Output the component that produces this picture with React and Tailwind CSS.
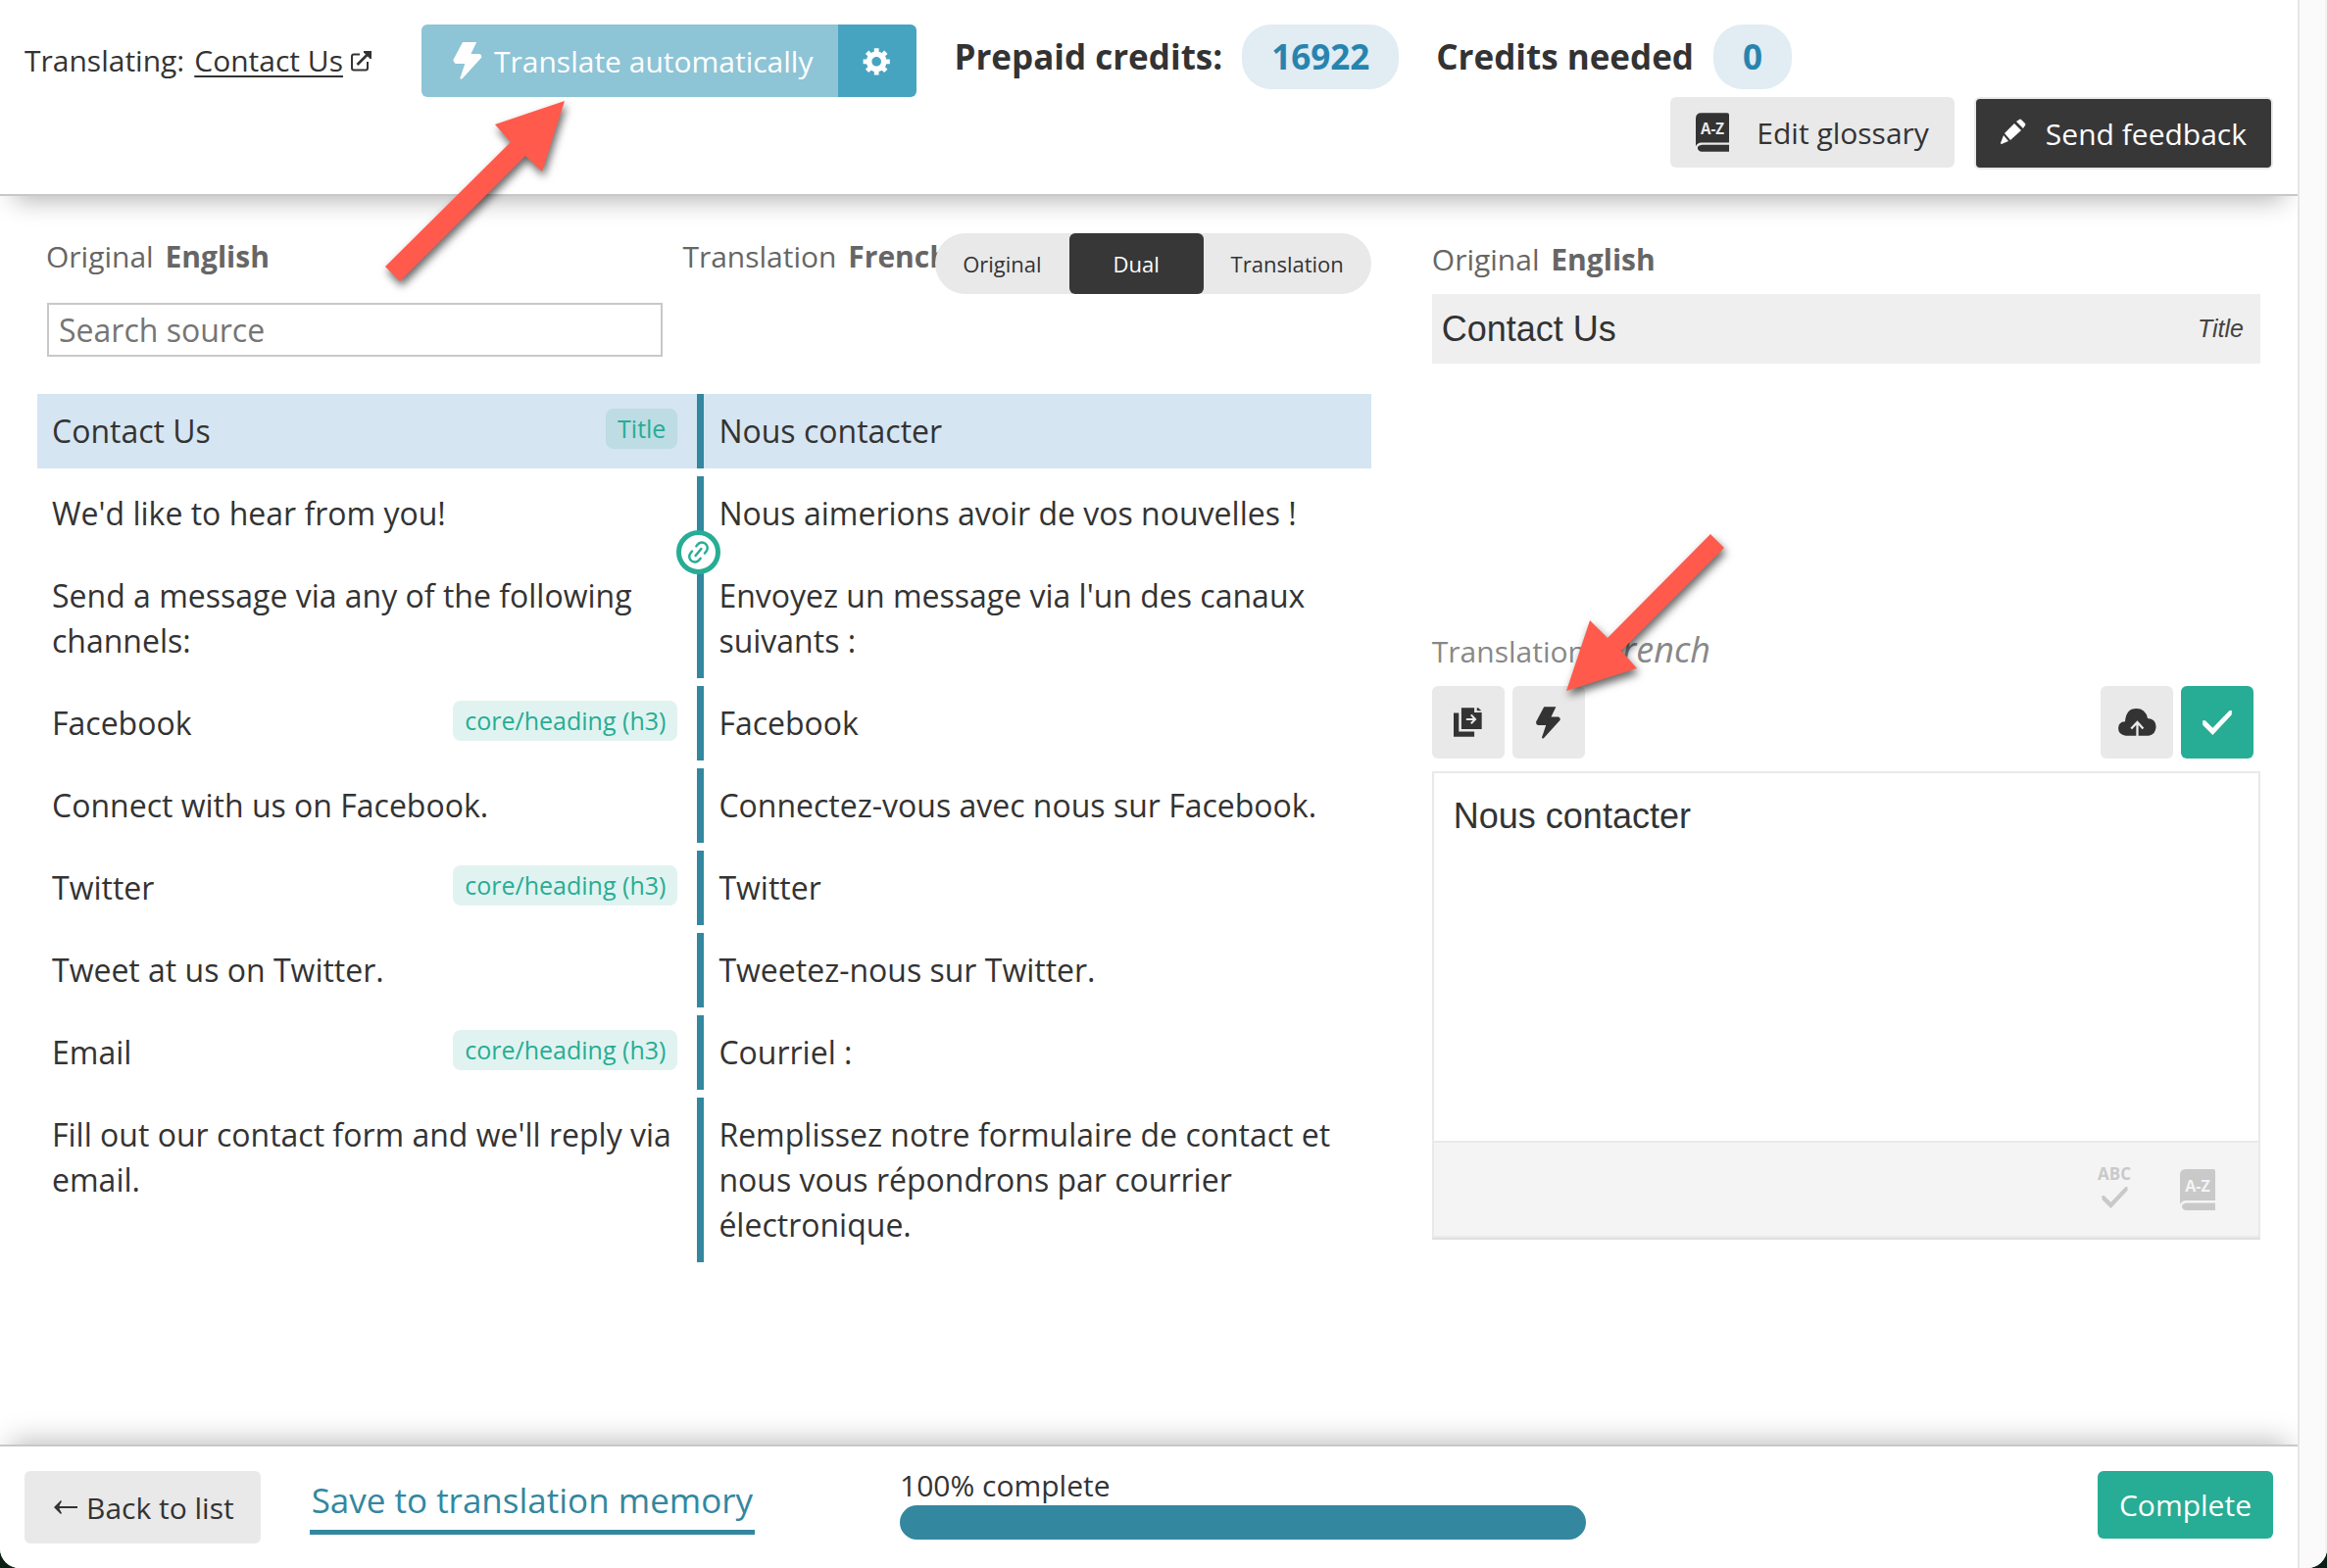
import React, { useState } from "react";
import { Link2 } from "lucide-react";

const segments = [
  { source: "Contact Us", target: "Nous contacter", tag: "Title" },
  {
    source: "We'd like to hear from you!",
    target: "Nous aimerions avoir de vos nouvelles !",
    linkNext: true,
  },
  {
    source: "Send a message via any of the following channels:",
    target: "Envoyez un message via l'un des canaux suivants :",
  },
  { source: "Facebook", target: "Facebook", tag: "core/heading (h3)" },
  {
    source: "Connect with us on Facebook.",
    target: "Connectez-vous avec nous sur Facebook.",
  },
  { source: "Twitter", target: "Twitter", tag: "core/heading (h3)" },
  { source: "Tweet at us on Twitter.", target: "Tweetez-nous sur Twitter." },
  { source: "Email", target: "Courriel :", tag: "core/heading (h3)" },
  {
    source: "Fill out our contact form and we'll reply via email.",
    target:
      "Remplissez notre formulaire de contact et nous vous répondrons par courrier électronique.",
  },
];

const views = ["Original", "Dual", "Translation"];

const BoltIcon = ({ className }) => (
  <svg viewBox="0 0 76 99" className={className} fill="currentColor" aria-hidden="true">
    <path d="M25 0H62L47 31H70Q76 33 75 41L24 97Q20 100 18 96L31 57H6Q0 55 0 47Z" />
  </svg>
);

const ExternalIcon = ({ className }) => (
  <svg viewBox="0 0 21 21" className={className} fill="none" stroke="currentColor" strokeWidth="2" aria-hidden="true">
    <path d="M9 3.500H3Q1 3.500 1 5.500V17.500Q1 19.500 3 19.500H15Q17 19.500 17 17.500V11" />
    <path d="M6.500 14L17.500 3" strokeWidth="2.600" />
    <path d="M13 0H21V8H19.500L13 1.500Z" fill="currentColor" stroke="none" />
  </svg>
);

const GearIcon = ({ className }) => (
  <svg viewBox="0 0 20 20" className={className} fill="currentColor" aria-hidden="true">
    <path d="M18 12h-2.180c-.170.700-.440 1.350-.810 1.930l1.540 1.540-2.100 2.100-1.540-1.540c-.580.360-1.230.630-1.910.790V19H8v-2.180c-.680-.160-1.330-.430-1.910-.790l-1.540 1.540-2.120-2.120 1.540-1.540c-.360-.580-.630-1.230-.790-1.910H1V9.030h2.170c.160-.700.440-1.350.800-1.940L2.430 5.550l2.100-2.100 1.540 1.540c.580-.370 1.240-.640 1.930-.810V2h3v2.180c.680.160 1.330.430 1.910.790l1.540-1.540 2.120 2.120-1.540 1.540c.360.590.640 1.240.800 1.940H18V12zm-8.500 1.500c1.660 0 3-1.340 3-3s-1.340-3-3-3-3 1.340-3 3 1.340 3 3 3z" />
  </svg>
);

const GlossaryIcon = ({ className, letters }) => (
  <svg viewBox="0 0 36 42" className={className} fill="currentColor" aria-hidden="true">
    <path d="M6 0H34Q36 0 36 2V32H6Q2 32 0 36V6Q0 0 6 0Z" />
    <path d="M7 34.500H36V42H6Q2 41 2 38Q2 35 7 34.500Z" />
    <text
      x="18"
      y="23"
      textAnchor="middle"
      fontFamily="'Open Sans', sans-serif"
      fontSize="16"
      fontWeight="700"
      fill={letters}
    >
      A-Z
    </text>
  </svg>
);

const PencilIcon = ({ className }) => (
  <svg viewBox="0 0 26 26" className={className} fill="currentColor" aria-hidden="true">
    <path d="M19 1Q20 0 21 1L25 5Q26 6 25 7L23 10L16 3Z" />
    <path d="M14 5L21 12L10 22L4 15Z" />
    <path d="M3 17L8 23L1 26Q0 26 0 25Z" />
  </svg>
);

const CopyIcon = ({ className }) => (
  <svg viewBox="0 0 88 90" className={className} fill="currentColor" aria-hidden="true">
    <path d="M0 16H16V74H64V90H0Z" />
    <path d="M24 0H64V15H87V66H24Z" />
    <path d="M72 0H76L86 9H72Z" />
    <path d="M39 36H66M54 22L67 36L54 49" fill="none" stroke="#e9e9e9" strokeWidth="6" />
  </svg>
);

const CloudIcon = ({ className }) => (
  <svg viewBox="0 0 118 85" className={className} fill="currentColor" aria-hidden="true">
    <path d="M23 84Q0 82 0 61Q0 41 21 40Q24 0 56 0Q84 0 91 30Q117 32 117 57Q115 82 94 84Z" />
    <path d="M59 85V44M40 62L59 42L77 62" fill="none" stroke="#e9e9e9" strokeWidth="7" />
  </svg>
);

const CheckIcon = ({ className }) => (
  <svg viewBox="0 0 90 76" className={className} fill="currentColor" aria-hidden="true">
    <path d="M0 31H8L31 54L83 0H90V13L31 76L0 45Z" />
  </svg>
);

const BackIcon = ({ className }) => (
  <svg viewBox="0 0 24 14" className={className} fill="currentColor" aria-hidden="true">
    <path d="M0 7L7 0L8 1Q6 4 5.500 6H24V8H5.500Q6 10 8 13L7 14Z" />
  </svg>
);

// callout arrows drawn over the editor
const Arrow = ({ points, className }) => (
  <svg viewBox="0 0 184 184" className={className} aria-hidden="true">
    <polygon points={points} fill="#ff5a4c" />
  </svg>
);

const Tag = ({ children }) => (
  <span className="mr-5 h-[41px] shrink-0 rounded-lg bg-[#27ad95]/14 px-3 text-[25px] leading-[40px] text-[#27ad95]">
    {children}
  </span>
);

const Header = () => (
  <header className="relative z-10 border-b-2 border-[#c8c8c8] bg-white px-[25px] pt-[25px] pb-[25px] shadow-[0_18px_24px_-14px_rgba(0,0,0,0.3)]">
    <div className="flex h-[74px] items-start">
      <div className="flex w-[405px] shrink-0 items-center text-[30px] leading-[74px]">
        <span>Translating:</span>
        <a href="#contact" className="ml-[10px] flex items-center">
          <span className="underline decoration-2 underline-offset-4">Contact Us</span>
          <ExternalIcon className="ml-2 size-[21px]" />
        </a>
      </div>
      <div className="flex h-full shrink-0 overflow-hidden rounded-md text-white">
        <button className="flex items-center bg-[#8dc4d6] pr-[26px] pl-8 text-[30px]">
          <BoltIcon className="mr-3 h-[38px] w-[30px]" />
          Translate automatically
        </button>
        <button aria-label="Settings" className="flex w-20 items-center justify-center bg-[#47a4c0]">
          <GearIcon className="size-8" />
        </button>
      </div>
      <div className="ml-[38px] flex shrink-0 items-center text-[35px] leading-[66px] font-bold">
        <span>Prepaid credits:</span>
        <span className="ml-5 rounded-[30px] bg-[#e1ecf3] px-[30px] text-[#2884af]">16922</span>
        <span className="ml-[38px]">Credits needed</span>
        <span className="ml-5 rounded-[30px] bg-[#e1ecf3] px-[30px] text-[#2884af]">0</span>
      </div>
    </div>
    <div className="flex h-[74px] items-start justify-end gap-5">
      <button className="flex h-[72px] items-center rounded-md bg-[#e9e9e9] px-[26px] text-[30px]">
        <GlossaryIcon className="mr-7 h-10 w-[34px]" letters="#e9e9e9" />
        Edit glossary
      </button>
      <button className="flex h-[74px] items-center rounded-md border-2 border-[#e9e9e9] bg-[#373737] px-[25px] text-[30px] text-white">
        <PencilIcon className="mr-5 mb-1 size-[26px]" />
        Send feedback
      </button>
    </div>
  </header>
);

const SegmentList = ({ view, setView }) => (
  <section className="relative w-3/5 shrink-0 pt-[38px]">
    <div className="grid grid-cols-2 text-[30px] leading-[48px] text-[#666]">
      <div className="pl-[9px]">
        Original <b className="ml-1">English</b>
      </div>
      <div className="-ml-[22px]">
        Translation <b className="ml-1">French</b>
      </div>
    </div>
    <div className="absolute top-[38px] right-0 flex h-[62px] overflow-hidden rounded-full bg-[#e9e9e9] text-[22px]">
      {views.map((item) => (
        <button
          key={item}
          onClick={() => setView(item)}
          className={
            item === view
              ? "w-[137px] rounded-md bg-[#373737] text-white"
              : "px-7"
          }
        >
          {item}
        </button>
      ))}
    </div>
    <div className="mt-[23px] grid grid-cols-2">
      <input
        type="text"
        aria-label="Search source"
        placeholder="Search source"
        className="mr-[42px] ml-[10px] h-[55px] border-2 border-[#c8c8c8] px-[10px] text-[32px] placeholder:text-[#757575]"
      />
    </div>
    <table className="mt-[30px] w-full table-fixed border-separate border-spacing-x-0 border-spacing-y-2 text-left text-[32px] leading-[46px]">
      <tbody>
        {segments.map((item, index) => (
          <tr key={index} className={index === 0 ? "bg-[#d5e5f2]" : ""}>
            <td className="relative border-r-[7px] border-[#33879f] py-[15px] pl-[15px] align-top">
              <div className="flex items-start justify-between">
                <span>{item.source}</span>
                {item.tag && <Tag>{item.tag}</Tag>}
              </div>
              {item.linkNext && (
                <button
                  aria-label="Link segments"
                  className="absolute -right-6 -bottom-6 z-10 flex size-[45px] items-center justify-center rounded-full border-5 border-[#27ad95] bg-white text-[#27ad95]"
                >
                  <Link2 className="size-[27px] shrink-0 -rotate-50" strokeWidth={2.2} />
                </button>
              )}
            </td>
            <td className="py-[15px] pl-[15px] align-top">{item.target}</td>
          </tr>
        ))}
      </tbody>
    </table>
  </section>
);

const Editor = ({ text, setText }) => (
  <section className="min-w-0 flex-1 pt-[41px]">
    <div className="text-[30px] leading-[48px] text-[#666]">
      Original <b className="ml-1">English</b>
    </div>
    <div className="mt-[11px] flex h-[71px] items-center justify-between bg-[#efefef] pr-[17px] pl-[10px] font-['Liberation_Sans',sans-serif] text-[36px]">
      <span>Contact Us</span>
      <i className="text-[25px] text-[#444]">Title</i>
    </div>
    <div className="mt-[268px] flex h-[48px] items-baseline text-[30px] leading-[48px] text-[#888]">
      <label htmlFor="translation">Translation</label>
      <i className="ml-5 text-[36px]">French</i>
    </div>
    <div className="mt-[13px] flex gap-2 pr-[7px]">
      <button aria-label="Copy source" className="flex size-[74px] items-center justify-center rounded-md bg-[#e9e9e9]">
        <CopyIcon className="h-[30px] w-[29px]" />
      </button>
      <button aria-label="Machine translate" className="flex size-[74px] items-center justify-center rounded-md bg-[#e9e9e9]">
        <BoltIcon className="h-[33px] w-[25px]" />
      </button>
      <button aria-label="Save draft" className="ml-auto flex size-[74px] items-center justify-center rounded-md bg-[#e9e9e9]">
        <CloudIcon className="h-7 w-[39px]" />
      </button>
      <button aria-label="Confirm" className="flex size-[74px] items-center justify-center rounded-md bg-[#27ad95] text-white">
        <CheckIcon className="h-[25px] w-[30px]" />
      </button>
    </div>
    <div className="mt-[13px] border-2 border-[#e9e9e9] shadow-[0_2px_0_#e0e0e0]">
      <textarea
        id="translation"
        value={text}
        onChange={(e) => setText(e.target.value)}
        className="block h-[375px] w-full resize-none px-5 pt-[23px] font-['Liberation_Sans',sans-serif] text-[36px] leading-[42px] outline-none"
      />
      <div className="flex h-[97px] items-start justify-end gap-[50px] border-t-2 border-[#e9e9e9] bg-[#f4f4f4] pr-[44px] text-[#c9c9c9]">
        <button aria-label="Check spelling" className="mt-[22px] flex flex-col items-center text-[17px] leading-[20px] font-bold">
          ABC
          <CheckIcon className="mt-[3px] h-[22px] w-[29px]" />
        </button>
        <button aria-label="Glossary" className="mt-[27px]">
          <GlossaryIcon className="h-[42px] w-[36px]" letters="#f4f4f4" />
        </button>
      </div>
    </div>
  </section>
);

const Footer = () => (
  <footer className="relative flex h-[126px] items-start border-t-2 border-[#c8c8c8] bg-white px-[25px] pt-[25px] shadow-[0_-14px_26px_-10px_rgba(0,0,0,0.25)]">
    <div className="flex w-[893px] shrink-0 items-start">
      <button className="flex h-[74px] items-center rounded-md bg-[#e9e9e9] pr-[27px] pl-[30px] text-[30px]">
        <BackIcon className="mr-[9px] h-[14px] w-6" />
        Back to list
      </button>
      <a
        href="#save"
        className="ml-[50px] border-b-5 border-[#33879f] px-[2px] text-[35px] leading-[60px] text-[#33879f]"
      >
        Save to translation memory
      </a>
    </div>
    <div className="w-[700px]">
      <div className="-mt-[6px] text-[30px] leading-[41px]">100% complete</div>
      <div className="h-[35px] rounded-full bg-[#33879f]" />
    </div>
    <button className="ml-auto h-[69px] rounded-md bg-[#27ad95] px-[22px] text-[30px] text-white">
      Complete
    </button>
  </footer>
);

const App = () => {
  const [view, setView] = useState("Dual");
  const [text, setText] = useState("Nous contacter");

  return (
    <div className="bg-[#0b1f14] font-['Open_Sans',sans-serif] text-[#333]">
      <div className="relative flex min-h-screen overflow-hidden rounded-b-[20px] bg-white">
        <div className="flex min-w-0 flex-1 flex-col">
          <Header />
          <main className="flex flex-1 gap-[62px] px-[38px]">
            <SegmentList view={view} setView={setView} />
            <Editor text={text} setText={setText} />
          </main>
          <Footer />
        </div>
        {/* scrollbar track */}
        <div className="relative z-20 w-[30px] shrink-0 border-r-2 border-l-2 border-r-[#f2f2f2] border-l-[#e6e6e6] bg-[#fafafa]" />

        <Arrow
          points="183,0 112,24 128,42 0,169 15,184 143,56 160,72"
          className="absolute top-[103px] left-[393px] z-30 size-[184px] overflow-visible drop-shadow-[2px_5px_4px_rgba(0,0,0,0.6)]"
        />
        <Arrow
          points="0,160 24,88 42,106 147,0 161,14 56,119 72,137"
          className="absolute top-[545px] left-[1598px] z-30 size-[184px] overflow-visible drop-shadow-[2px_5px_4px_rgba(0,0,0,0.6)]"
        />
      </div>
    </div>
  );
};

export default App;
